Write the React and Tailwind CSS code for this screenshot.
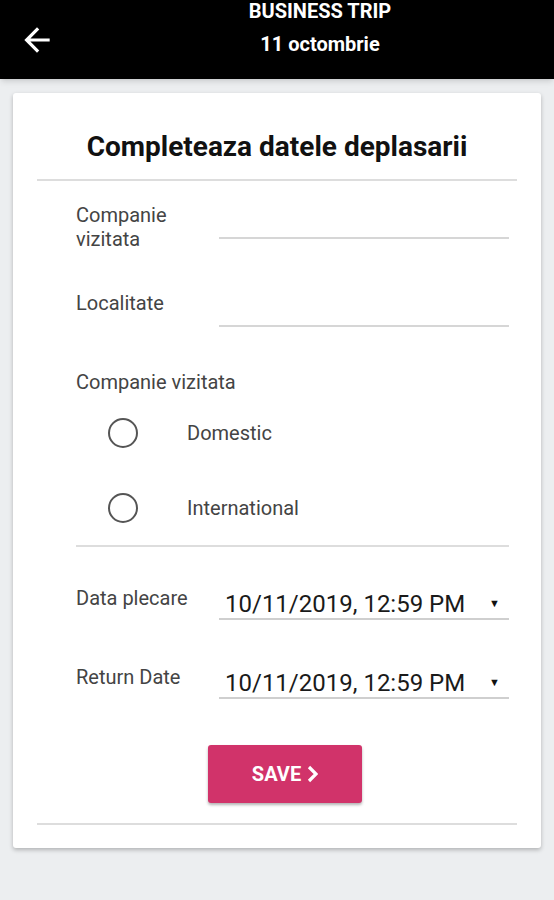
import React, { useState } from 'react';
import { MdArrowBack } from 'react-icons/md';

// Underlined text field with label on the left
const FieldRow = ({ label, className, labelClass, inputClass }) => (
  <div className={`flex items-start ${className}`}>
    <div className={`w-[143px] shrink-0 text-[20px] leading-6 text-[#444] ${labelClass}`}>{label}</div>
    <div className={`flex-1 border-b-2 border-[#d6d6d6] ${inputClass}`} />
  </div>
);

const DateRow = ({ label, value, className }) => (
  <div className={`flex items-start ${className}`}>
    <div className="w-[143px] shrink-0 text-[20px] leading-6 text-[#444]">{label}</div>
    <div className="flex-1 h-[34px] border-b-2 border-[#cfcfcf] flex items-center justify-between pl-[6px] pr-[9px] pt-[4px]">
      <span className="text-[24px] text-[#1a1a1a] leading-[30px]">{value}</span>
      <span className="text-[11px] text-[#111]">▼</span>
    </div>
  </div>
);

const Radio = ({ label, checked, onClick, className = '' }) => (
  <div className={`h-[75px] flex items-center pl-[32px] cursor-pointer ${className}`} onClick={onClick}>
    <div className="w-[30px] h-[30px] rounded-full border-2 border-[#555] flex items-center justify-center">
      {checked && <div className="w-[16px] h-[16px] rounded-full bg-[#555]" />}
    </div>
    <span className="ml-[49px] text-[20px] text-[#444]">{label}</span>
  </div>
);

const App = () => {
  const [trip, setTrip] = useState(null);

  return (
    <div className="min-h-[900px] bg-[#eceef0] font-['Roboto',sans-serif]">
      {/* Header */}
      <div className="h-[79px] bg-black flex shadow-md">
        <div className="w-[86px] shrink-0 flex items-center pl-[18px]">
          <MdArrowBack size={38} color="#fff" />
        </div>
        <div className="flex-1 flex flex-col items-center text-white font-bold text-[20px]">
          <div className="leading-[22px]">BUSINESS TRIP</div>
          <div className="leading-[22px] mt-[11px]">11 octombrie</div>
        </div>
      </div>

      {/* Card */}
      <div className="mx-[13px] mt-[14px] bg-white rounded-[3px] shadow-[0_2px_4px_rgba(0,0,0,0.25)] px-[24px] pt-[39px] pb-[23px]">
        <h1 className="text-center text-[28px] leading-[30px] font-bold text-[#111]">Completeaza datele deplasarii</h1>
        <div className="mt-[17px] h-[2px] bg-[#dddddd]" />

        <div className="ml-[39px] mr-[8px]">
          <FieldRow label={<>Companie<br />vizitata</>} className="mt-[19px] h-[79px]" labelClass="pt-[3px]" inputClass="h-[39px]" />
          <FieldRow label="Localitate" labelClass="pt-[12px]" inputClass="h-[48px]" />

          <div className="mt-[43px] text-[20px] leading-6 text-[#444]">Companie vizitata</div>
          <Radio label="Domestic" className="mt-[1px]" checked={trip === 'd'} onClick={() => setTrip('d')} />
          <Radio label="International" checked={trip === 'i'} onClick={() => setTrip('i')} />
          <div className="h-[2px] bg-[#dddddd]" />

          <DateRow label="Data plecare" value="10/11/2019, 12:59 PM" className="mt-[39px]" />
          <DateRow label="Return Date" value="10/11/2019, 12:59 PM" className="mt-[45px]" />
        </div>

        <div className="flex justify-center mt-[46px] pl-[16px]">
          <button className="w-[154px] h-[58px] rounded-[3px] bg-[#d1336a] text-white font-bold text-[20px] shadow-[0_2px_3px_rgba(0,0,0,0.3)] flex items-center justify-center gap-[5px]">
            SAVE
            <svg width="12" height="18" viewBox="0 0 12 18" fill="none">
              <path d="M3 2l7 7-7 7" stroke="#fff" strokeWidth="3.2" />
            </svg>
          </button>
        </div>
        <div className="mt-[20px] h-[2px] bg-[#dddddd]" />
      </div>
    </div>
  );
};

export default App;
